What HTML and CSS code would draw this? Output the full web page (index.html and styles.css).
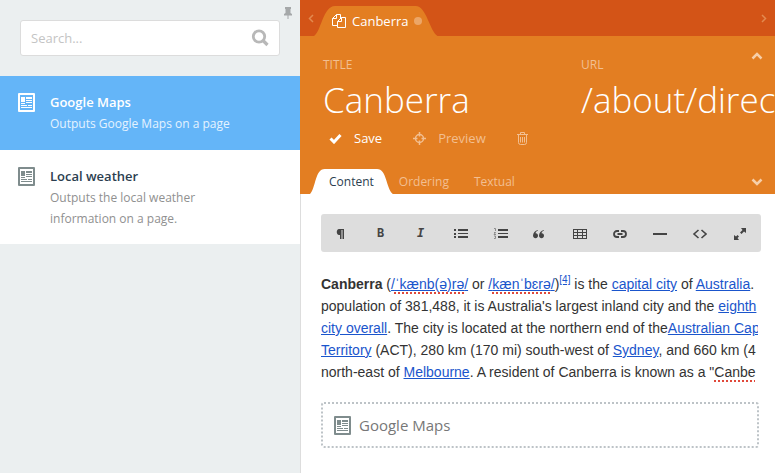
FILE: index.html
```
<!DOCTYPE html>
<html lang="en">
<head>
<meta charset="UTF-8">
<meta name="viewport" content="width=device-width, initial-scale=1.0">
<title>Canberra</title>
<link rel="stylesheet" href="styles.css">
</head>
<body>

<!-- Shared icons -->
<svg class="sprite" aria-hidden="true">
    <symbol id="icon-page" viewBox="0 0 17 19">
        <path fill-rule="evenodd" d="M1 0h15a1 1 0 0 1 1 1v17a1 1 0 0 1-1 1H1a1 1 0 0 1-1-1V1a1 1 0 0 1 1-1zM2 2v15h13V2z"/>
        <path d="M3 4h4v5H3zM8 4h6v2H8zM8 7h6v1H8zM8 9h6v1H8zM3 10h4v1H3zM3 12h6v1H3zM10 12h4v1h-4zM3 14h11v1H3z"/>
    </symbol>
</svg>

<div class="app">
    <aside class="sidebar">
        <button class="pin" aria-label="Pin sidebar">
            <svg width="8" height="12" viewBox="0 0 8 12"><path d="M1 0h6v2H6.500v4L8 7v1.500H4.500V12h-1V8.500H0V7l1.500-1V2H1z" fill="#a5a8a9"/></svg>
        </button>
        <form class="search">
            <input type="search" placeholder="Search..." aria-label="Search">
            <button type="button" aria-label="Search">
                <svg width="18" height="18" viewBox="0 0 18 18" fill="none" stroke="#b8b8b8"><circle cx="8" cy="7.500" r="5.700" stroke-width="2.800"/><path d="M12 11.500l4.500 4.500" stroke-width="3.200"/></svg>
            </button>
        </form>
        <ul class="widgets">
            <li class="widget active">
                <svg class="page-icon"><use href="#icon-page"/></svg>
                <div class="widget-text">
                    <div class="widget-title">Google Maps</div>
                    <div class="widget-description">Outputs Google Maps on a page</div>
                </div>
            </li>
            <li class="widget">
                <svg class="page-icon"><use href="#icon-page"/></svg>
                <div class="widget-text">
                    <div class="widget-title">Local weather</div>
                    <div class="widget-description">Outputs the local weather information on a page.</div>
                </div>
            </li>
        </ul>
    </aside>

    <main class="main">
        <nav class="documents">
            <button class="scroll" aria-label="Previous tab">
                <svg width="6" height="9" viewBox="0 0 6 9"><path d="M5 1L1.500 4.500L5 8"/></svg>
            </button>
            <button class="document">
                <svg class="tab-shape" viewBox="0 0 124 30" preserveAspectRatio="none"><path d="M0 30C7 26 9 0 21 0H102C113 0 116 25 124 30z" fill="#e37e22"/></svg>
                <svg class="copy-icon" width="15" height="15" viewBox="0 0 15 15" fill="none" stroke="#fff"><path d="M5.500 11.500h-5v-7l4-4h4v4M4.500.5v4h-4M5.500 13.500v-6l4-4h4v10zM9.500 3.500v4h-4"/></svg>
                <span>Canberra</span>
                <i class="unsaved"></i>
            </button>
            <button class="scroll next" aria-label="Next tab">
                <svg width="6" height="9" viewBox="0 0 6 9"><path d="M1 1l3.500 3.500L1 8"/></svg>
            </button>
        </nav>

        <header class="header">
            <button class="collapse" aria-label="Collapse header">
                <svg width="12" height="8" viewBox="0 0 12 8"><path d="M1.500 6.500L6 2l4.500 4.500"/></svg>
            </button>
            <div class="fields">
                <div class="field">
                    <label for="title">TITLE</label>
                    <input id="title" type="text" value="Canberra">
                </div>
                <div class="field">
                    <label for="url">URL</label>
                    <input id="url" type="text" value="/about/direc">
                </div>
            </div>
            <div class="actions">
                <button class="save">
                    <svg width="13" height="11" viewBox="0 0 13 11"><path d="M1.500 5.500l3.500 3.500L11.500 2" fill="none" stroke="#fff" stroke-width="3"/></svg>
                    Save
                </button>
                <button class="preview">
                    <svg width="13" height="13" viewBox="0 0 13 13" fill="none" stroke="currentColor"><circle cx="6.500" cy="6.500" r="4" stroke-width="1.500"/><path d="M6.500 0v4.500M6.500 8.500V13M0 6.500h4.500M8.500 6.500H13" stroke-width="1.500"/></svg>
                    Preview
                </button>
                <button class="delete" aria-label="Delete">
                    <svg width="11" height="13" viewBox="0 0 11 13" fill="none" stroke="currentColor"><path d="M0 2.500h11M3.500 2.500v-2h4v2M1.500 2.500v8q0 2 2 2h4q2 0 2-2v-8M3.500 5v5.500M5.500 5v5.500M7.500 5v5.500"/></svg>
                </button>
            </div>
            <nav class="sections">
                <button class="section active">
                    <svg class="tab-shape" viewBox="0 0 84 25" preserveAspectRatio="none"><path d="M0 25C6 19 5 0 15 0H68C78 0 77 19 84 25z" fill="#fff"/></svg>
                    <span>Content</span>
                </button>
                <button class="section">Ordering</button>
                <button class="section">Textual</button>
                <button class="expand" aria-label="More sections">
                    <svg width="12" height="8" viewBox="0 0 12 8"><path d="M1.500 1.500L6 6l4.500-4.500"/></svg>
                </button>
            </nav>
        </header>

        <section class="content">
            <div class="toolbar">
                <button aria-label="Paragraph"><svg viewBox="0 0 15 15"><path d="M5 3h6v10H9.500V4H8.500v9H7V9H6C3 9 3 3 6 3z"/></svg></button>
                <button class="bold" aria-label="Bold">B</button>
                <button class="italic" aria-label="Italic">I</button>
                <button aria-label="Bullet list"><svg viewBox="0 0 15 15"><path d="M1 3h2v2H1zM1 7h2v2H1zM1 10h2v2H1zM5 3h10v2H5zM5 7h10v1H5zM5 10h10v2H5z"/></svg></button>
                <button aria-label="Numbered list"><svg viewBox="0 0 15 15"><path d="M5 3h10v2H5zM5 7h10v1H5zM5 10h10v2H5z"/><path d="M1 2.500h1.500V5M1 6.500h1.500L1 8.500h2M1 10h1.500v2.500H1" fill="none" stroke="#777" stroke-width=".8"/></svg></button>
                <button aria-label="Quote"><svg viewBox="0 0 15 15"><path id="quote-mark" d="M6 4C3 4.500 1 7 1 9.500c0 3.500 5 3.500 5 .3C6 8 5 7 3.500 7.200 3.800 5.800 4.700 5 6 4.500z"/><use href="#quote-mark" x="6"/></svg></button>
                <button aria-label="Table"><svg viewBox="0 0 15 15"><path fill-rule="evenodd" d="M1 3h14v10H1zM2 4v2h3V4zM6 4v2h4V4zM11 4v2h3V4zM2 7v2h3V7zM6 7v2h4V7zM11 7v2h3V7zM2 10v2h3v-2zM6 10v2h4v-2zM11 10v2h3v-2z"/></svg></button>
                <button aria-label="Link"><svg viewBox="0 0 15 15" fill="none" stroke="#444" stroke-width="1.800"><path d="M7 5H5a3 3 0 0 0 0 6h2M9 5h2a3 3 0 0 1 0 6H9M5.500 8h5"/></svg></button>
                <button aria-label="Horizontal rule"><svg viewBox="0 0 15 15"><path d="M1 7h14v2H1z"/></svg></button>
                <button aria-label="Source"><svg viewBox="0 0 15 15" fill="none" stroke="#444" stroke-width="1.600"><path d="M6.500 4L2 8l4.500 4M9.500 4L14 8l-4.500 4"/></svg></button>
                <button aria-label="Fullscreen"><svg viewBox="0 0 15 15"><path d="M9 2h5v5l-2-1.500L9.500 8 8 6.500 10.500 4zM2 14V9l2 1.500L5.500 9 7 10.500 5.500 12 7 14z"/></svg></button>
            </div>

            <div class="editor">
                <p><b>Canberra</b> (<a href="#">/<span class="misspelled">ˈkænb(ə)rə</span>/</a> or <a href="#">/<span class="misspelled">kænˈbɛrə</span>/</a>)<sup><a href="#">[4]</a></sup> is the <a href="#">capital city</a> of <a href="#">Australia</a>.<br>
                population of 381,488, it is Australia's largest inland city and the <a href="#">eighth</a><br>
                <a href="#">city overall</a>. The city is located at the northern end of the<a href="#">Australian Cap</a><br>
                <a href="#">Territory</a> (ACT), 280 km (170 mi) south-west of <a href="#">Sydney</a>, and 660 km (4<br>
                north-east of <a href="#">Melbourne</a>. A resident of Canberra is known as a "<span class="misspelled">Canbe</span></p>
            </div>

            <div class="placeholder">
                <svg class="page-icon"><use href="#icon-page"/></svg>
                <span>Google Maps</span>
            </div>
        </section>
    </main>
</div>

</body>
</html>
```

FILE: styles.css
```
* {
    box-sizing: border-box;
}
body {
    margin: 0;
    font-family: "Open Sans", sans-serif;
    font-size: 12px;
    color: #333;
}
button {
    background: none;
    border: none;
    padding: 0;
    font: inherit;
    color: inherit;
    cursor: pointer;
}
svg {
    display: block;
    flex: none;
}
.sprite {
    position: absolute;
    width: 0;
    height: 0;
}
.app {
    display: flex;
    min-height: 100vh;
}

/* Sidebar */
.sidebar {
    position: relative;
    flex: 0 0 300px;
    background-color: #ebeff0;
}
.pin {
    position: absolute;
    top: 7px;
    right: 8px;
}
.search {
    display: flex;
    align-items: center;
    height: 36px;
    margin: 20px;
    padding: 0 10px;
    background-color: #fff;
    border: 1px solid #dcdcdc;
    border-radius: 3px;
}
.search input {
    flex: 1;
    min-width: 0;
    padding: 0;
    border: none;
    outline: none;
    font: inherit;
    font-size: 13px;
}
.search input::placeholder {
    color: #c4c4c4;
}
.widgets {
    list-style: none;
    margin: 0;
    padding: 0;
}
.widget {
    display: flex;
    gap: 15px;
    padding: 16px 60px 15px 18px;
    background-color: #fff;
    line-height: 21px;
    color: #909090;
}
.widget.active {
    padding-bottom: 16px;
    background-color: #64b5f8;
    color: #e4f3ff;
}
.page-icon {
    width: 17px;
    height: 19px;
    margin-top: 1px;
    fill: #7f8c8d;
}
.widget.active .page-icon {
    fill: #fff;
}
.widget-title {
    font-size: 13px;
    font-weight: 600;
    color: #2c3e50;
}
.widget.active .widget-title {
    color: #fff;
}

/* Open documents */
.main {
    flex: 1;
    min-width: 0;
    display: flex;
    flex-direction: column;
}
.documents {
    display: flex;
    align-items: flex-end;
    height: 36px;
    padding: 0 8px;
    background-color: #d35417;
}
.scroll {
    align-self: center;
}
.scroll path {
    fill: none;
    stroke: #e38a50;
    stroke-width: 1.500;
}
.scroll.next {
    margin-left: auto;
}
.document {
    position: relative;
    display: flex;
    align-items: center;
    gap: 5px;
    height: 30px;
    padding: 0 16px 0 18px;
    font-size: 13px;
    color: #fff;
}
.document span,
.copy-icon,
.unsaved {
    position: relative;
}
.tab-shape {
    position: absolute;
    top: 0;
    left: 0;
    width: 100%;
    height: 100%;
}
.unsaved {
    width: 8px;
    height: 8px;
    border-radius: 50%;
    background-color: #eca666;
}

/* Header */
.header {
    position: relative;
    background-color: #e37e22;
    color: #f2bf91;
}
.collapse {
    position: absolute;
    top: 16px;
    right: 12px;
}
.collapse path,
.expand path {
    fill: none;
    stroke: #f6cfa9;
    stroke-width: 2.500;
}
.fields {
    display: flex;
    padding: 20px 0 0 23px;
    overflow: hidden;
}
.field {
    flex: 0 0 258px;
}
.field label {
    display: block;
    line-height: 18px;
}
.field input {
    display: block;
    width: 100%;
    height: 50px;
    padding: 0;
    border: none;
    outline: none;
    background: none;
    font: inherit;
    font-size: 35px;
    font-weight: 300;
    color: #fff;
}
.actions {
    display: flex;
    height: 28px;
    padding-left: 29px;
    gap: 31px;
    font-size: 13px;
}
.actions button {
    display: flex;
    align-items: center;
    gap: 12px;
}
.actions .save {
    color: #fff;
}
.sections {
    display: flex;
    align-items: center;
    height: 42px;
    padding: 17px 12px 0 10px;
}
.section {
    height: 25px;
    margin-right: 25px;
}
.section.active {
    position: relative;
    margin-right: 6px;
    padding: 0 19px;
    color: #2c3e50;
}
.section span {
    position: relative;
}
.expand {
    margin-left: auto;
}

/* Content */
.content {
    flex: 1;
    padding: 20px 14px 20px 20px;
    background-color: #fff;
    border-left: 1px solid #ddd;
}
.toolbar {
    display: flex;
    height: 38px;
    padding-right: 2px;
    background-color: #ddd;
    border-radius: 3px;
}
.toolbar button {
    flex: 1;
    display: flex;
    align-items: center;
    justify-content: center;
    font-weight: 700;
    color: #444;
}
.toolbar svg {
    width: 15px;
    height: 15px;
    fill: #444;
}
.toolbar svg[fill="none"] {
    fill: none;
}
.toolbar .bold,
.toolbar .italic {
    font-family: "DejaVu Sans Mono", monospace;
}
.toolbar .italic {
    font-style: italic;
}
.editor {
    margin: 21px 3px 0 0;
    overflow: hidden;
    white-space: nowrap;
    font-family: "Liberation Sans", Arial, sans-serif;
    font-size: 14px;
    line-height: 22px;
}
.editor p {
    margin: 0;
}
.editor a {
    color: #1a55cc;
}
.editor sup {
    font-size: 10px;
    line-height: 0;
}
.misspelled {
    text-decoration: underline dotted #e0483a 2px;
    text-underline-offset: 3px;
}
.placeholder {
    display: flex;
    align-items: center;
    gap: 8px;
    height: 46px;
    margin: 19px 2px 0 0;
    padding: 0 11px;
    border: 2px dotted #bdc3c7;
    border-radius: 3px;
    font-size: 15px;
    color: #777;
}
.placeholder .page-icon {
    margin-top: 0;
}
```
